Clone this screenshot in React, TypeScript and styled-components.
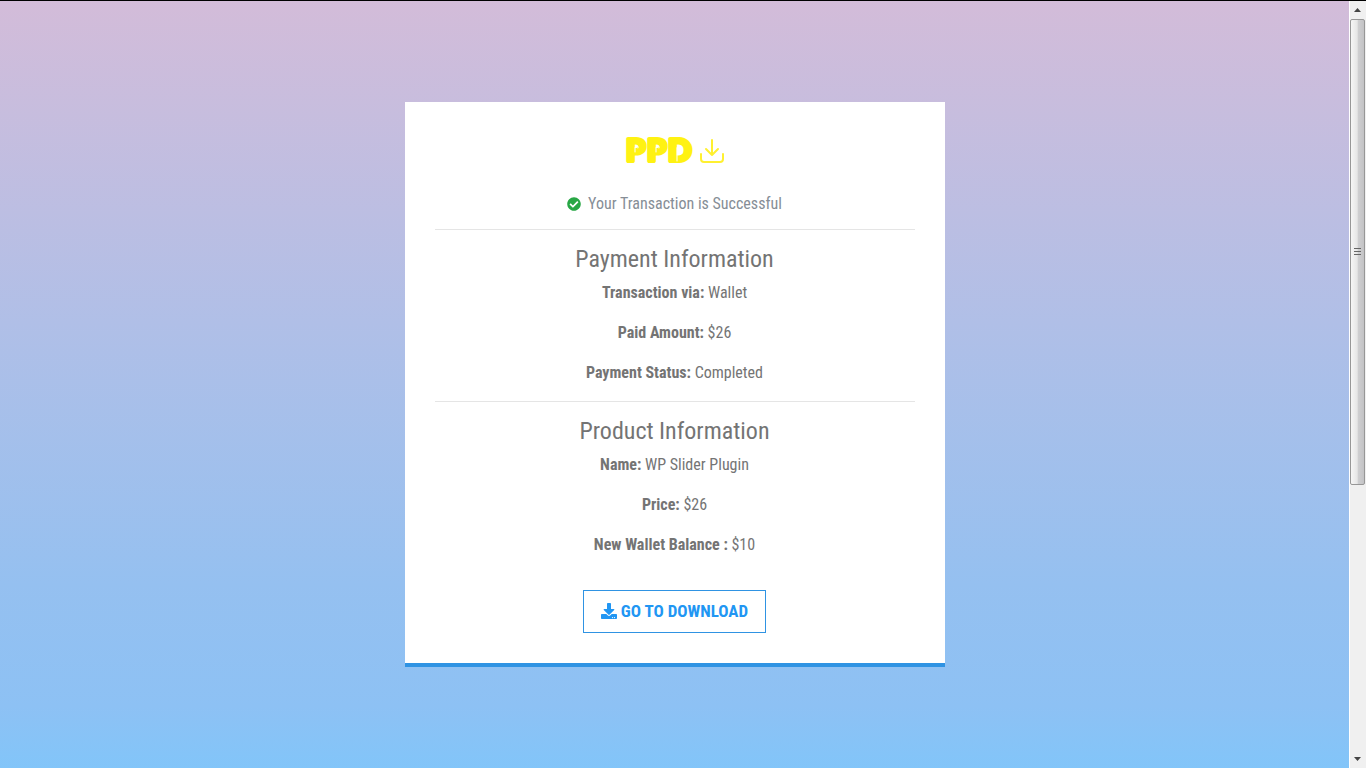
import React from "react";
import styled, { createGlobalStyle } from "styled-components";
import { FaCheckCircle, FaDownload } from "react-icons/fa";

const GlobalStyle = createGlobalStyle`
  * { box-sizing: border-box; }
  body {
    margin: 0;
    font-family: "Roboto Condensed", Roboto, "Liberation Sans Narrow", sans-serif;
    font-size: 16px;
    line-height: 24px;
    color: #747474;
  }
`;

const Screen = styled.div`
  display: flex;
  min-height: 100vh;
  border-top: 1px solid #000;
`;

const Page = styled.main`
  flex: 1;
  display: flex;
  justify-content: center;
  align-items: flex-start;
  padding: 101px 16px;
  background: linear-gradient(#d3bcd9, #b0bfe7 42%, #95c0f0 76%, #8dc1f4 92%, #82c5f9);
`;

const Card = styled.section`
  width: 100%;
  max-width: 540px;
  padding: 30px;
  background: #fff;
  border-bottom: 4px solid #2f93e3;
  text-align: center;
`;

const Logo = styled.div`
  display: flex;
  justify-content: center;
  align-items: center;
  height: 40px;
  margin-bottom: 20px;
`;

const Status = styled.p`
  display: flex;
  justify-content: center;
  align-items: center;
  gap: 7px;
  margin: 0;
  color: #868e96;

  svg { color: #28a745; }
`;

const Divider = styled.hr`
  height: 1px;
  margin: 13px 0 15px;
  border: 0;
  background: #e5e5e5;
`;

const Title = styled.h2`
  margin: 0 0 7px;
  font-size: 24px;
  line-height: 29px;
  font-weight: 400;
`;

const Detail = styled.p`
  margin: 0 0 16px;
`;

const DownloadButton = styled.button`
  display: inline-flex;
  align-items: center;
  gap: 4px;
  height: 43px;
  margin-top: 17px;
  padding: 0 17px 2px;
  border: 1px solid #2f93e3;
  background: #fff;
  color: #2196f3;
  font-family: inherit;
  font-size: 17px;
  font-weight: 700;
  text-transform: uppercase;
  cursor: pointer;
`;

const ScrollRail = styled.div`
  display: flex;
  flex-direction: column;
  align-items: center;
  width: 17px;
  padding-right: 1px;
  border-left: 1px solid #fff;
  background: #f0f0f0;
`;

const RailArrow = styled.span`
  display: flex;
  align-items: center;
  justify-content: center;
  height: 18px;
`;

const RailTrack = styled.div`
  flex: 1;
  width: 15px;
`;

const RailThumb = styled.div`
  display: flex;
  align-items: center;
  justify-content: center;
  height: 63.7%;
  border: 1px solid #979797;
  border-radius: 2px;
  background: linear-gradient(90deg, #f6f6f6, #e6e6e6 48%, #cfcfd1 55%, #c3c3c5);
`;

const LogoMark = () => (
  <svg width="100" height="40" viewBox="0 0 100 40" overflow="visible" role="img" aria-label="PPD download">
    <text x="1 22 43" y="29" fill="#fff212" stroke="#fff212" strokeWidth="4" strokeLinejoin="round" fontFamily="Lato, sans-serif" fontWeight="900" fontSize="31">PPD</text>
    <path d="M10 20v-4q0-2 2-2 2 0 1 2M31 20v-4q0-2 2-2 2 0 1 2M52 29v-13q0-2 2-2 2 0 1 2" fill="none" stroke="#fff" strokeWidth="1" strokeLinecap="round" />
    <path d="M76 22v5q0 3 3 3h16q3 0 3-3v-5M87 8v15M81 17l6 6 6-6" fill="none" stroke="#fff030" strokeWidth="2" strokeLinecap="round" strokeLinejoin="round" />
  </svg>
);

const payment = [
  ["Transaction via:", "Wallet"],
  ["Paid Amount:", "$26"],
  ["Payment Status:", "Completed"],
];

const product = [
  ["Name:", "WP Slider Plugin"],
  ["Price:", "$26"],
  ["New Wallet Balance :", "$10"],
];

const Details = ({ items }: { items: string[][] }) => (
  <>
    {items.map(([label, value]) => (
      <Detail key={label}><strong>{label}</strong> {value}</Detail>
    ))}
  </>
);

export default function App() {
  return (
    <>
      <GlobalStyle />
      <Screen>
        <Page>
          <Card>
            <Logo><LogoMark /></Logo>
            <Status><FaCheckCircle size={14} />Your Transaction is Successful</Status>
            <Divider />
            <Title>Payment Information</Title>
            <Details items={payment} />
            <Divider />
            <Title>Product Information</Title>
            <Details items={product} />
            <DownloadButton type="button"><FaDownload size={16} />Go to download</DownloadButton>
          </Card>
        </Page>
        <ScrollRail aria-hidden="true">
          <RailArrow><svg width="7" height="4"><path d="M0 4L3.500 0L7 4Z" fill="#444" /></svg></RailArrow>
          <RailTrack>
            <RailThumb><svg width="7" height="8"><path d="M0 .5h7M0 3.500h7M0 6.500h7" stroke="#666" /></svg></RailThumb>
          </RailTrack>
          <RailArrow><svg width="7" height="4"><path d="M0 0L3.500 4L7 0Z" fill="#444" /></svg></RailArrow>
        </ScrollRail>
      </Screen>
    </>
  );
}
